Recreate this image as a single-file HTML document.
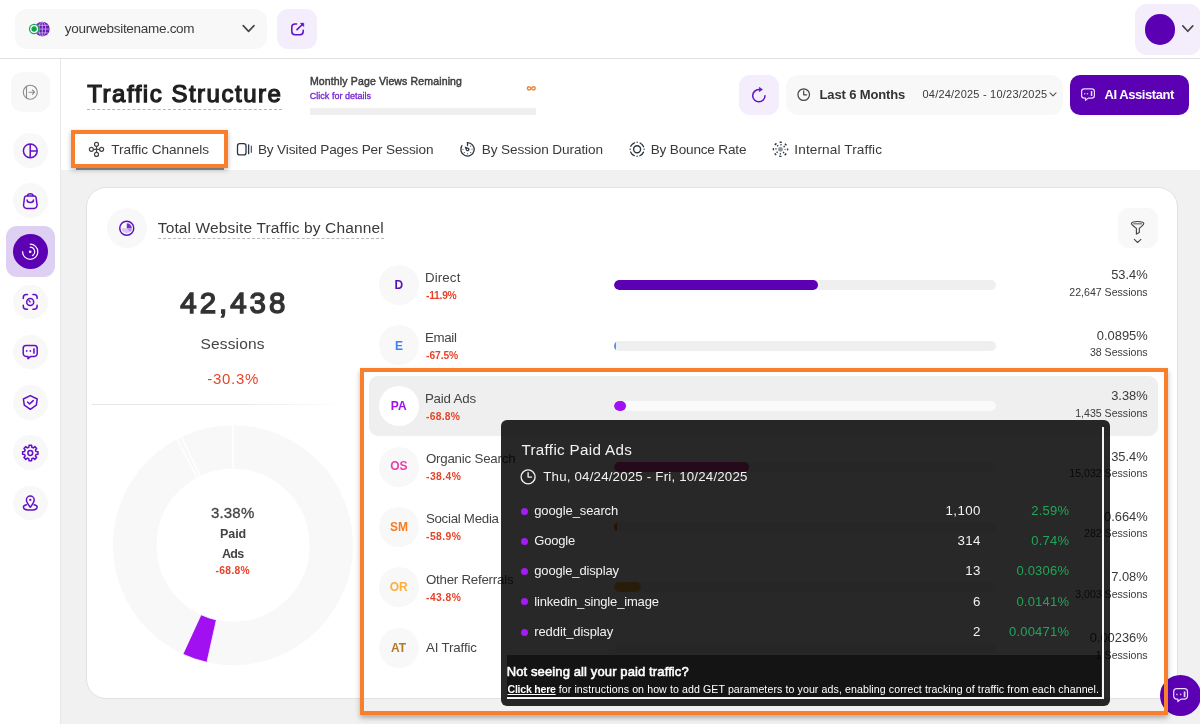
<!DOCTYPE html>
<html>
<head>
<meta charset="utf-8">
<title>Traffic Structure</title>
<style>
*{box-sizing:border-box;margin:0;padding:0}
html,body{width:1200px;height:724px;overflow:hidden;background:#fff;font-family:"Liberation Sans",sans-serif;color:#333}
.a{position:absolute}
.t{position:absolute;white-space:nowrap;line-height:1}
svg{position:absolute;overflow:visible}
.sbc{position:absolute;left:13px;width:34.800px;height:34.800px;border-radius:50%;background:#f8f8f8}
.chc{position:absolute;left:378.9px;width:40px;height:40px;border-radius:50%;background:#f8f8f8}
.trk{position:absolute;left:613.75px;width:382.5px;height:10px;border-radius:5px;background:#efefef;overflow:hidden}
.fil{position:absolute;left:0;top:0;height:10px;border-radius:5px}
.bul{position:absolute;left:520.7px;width:7px;height:7px;border-radius:50%;background:#a21cf3}
</style>
</head>
<body>
<div id="wrap" style="position:absolute;left:0;top:0;width:1200px;height:724px;will-change:transform">
<!-- base layout -->
<div class="a" style="left:0;top:0;width:1200px;height:58px;background:#fff"></div>
<div class="a" style="left:0;top:58px;width:1200px;height:1px;background:#e0e0e0"></div>
<div class="a" style="left:60px;top:59px;width:1px;height:665px;background:#e7e7e7"></div>
<div class="a" style="left:61px;top:170px;width:1139px;height:554px;background:#f1f1f1"></div>

<!-- TOP BAR -->
<div class="a" style="left:15px;top:9px;width:252px;height:40px;border-radius:12px;background:#f8f8f8"></div>
<svg style="left:26px;top:19px" width="28" height="20" viewBox="26 19 28 20">
  <circle cx="42.300" cy="29.100" r="7.400" fill="#6a1bb5"/>
  <g stroke="#d9c4f2" stroke-width="0.700" fill="none">
    <path d="M42.300 21.700v14.800M34.900 29.100h14.800M36.500 25.300h11.600M36.500 32.900h11.600"/>
    <ellipse cx="42.300" cy="29.100" rx="3.400" ry="7.400"/>
  </g>
  <circle cx="34.1" cy="29" r="5.2" fill="#1fa855"/>
  <circle cx="34.1" cy="29" r="3.9" fill="#fff"/>
  <circle cx="34.1" cy="29" r="2.7" fill="#10a34e"/>
</svg>
<svg style="left:240px;top:22px" width="18" height="14" viewBox="240 22 18 14"><path d="M243.2 25.6l5.4 5.8 5.4-5.8" fill="none" stroke="#444" stroke-width="1.6" stroke-linecap="round" stroke-linejoin="round"/></svg>
<div class="a" style="left:277px;top:9px;width:40px;height:40px;border-radius:11px;background:#f3edfc"></div>
<svg style="left:288px;top:20px" width="20" height="20" viewBox="288 20 20 20">
  <g fill="none" stroke="#5e14c4" stroke-width="1.550" stroke-linecap="round" stroke-linejoin="round">
    <path d="M296.6 23.9h-1.6a3.2 3.2 0 0 0-3.2 3.2v4.5a3.2 3.2 0 0 0 3.2 3.2h5a3.2 3.2 0 0 0 3.2-3.2v-1.4"/>
    <path d="M297 29.6l5.6-5.4"/>
  </g>
  <path d="M300.500 23.300h3.200v3.200z" fill="#5e14c4" stroke="#5e14c4" stroke-width="0.700" stroke-linejoin="round"/>
</svg>
<div class="a" style="left:1135px;top:4.100px;width:66px;height:50.500px;border-radius:12px;background:#f3edfc"></div>
<div class="a" style="left:1145px;top:14.3px;width:30.4px;height:30.4px;border-radius:50%;background:#5b00b3"></div>
<svg style="left:1180px;top:22px" width="16" height="14" viewBox="1180 22 16 14"><path d="M1182.8 25.9l5 5.4 5-5.4" fill="none" stroke="#444" stroke-width="1.6" stroke-linecap="round" stroke-linejoin="round"/></svg>

<!-- SIDEBAR -->
<div class="a" style="left:10.8px;top:72px;width:39.2px;height:40px;border-radius:11px;background:#f8f8f8"></div>
<svg style="left:20px;top:82px" width="20" height="20" viewBox="20 82 20 20">
  <g fill="none" stroke="#8c8c8c" stroke-width="1.1" stroke-linecap="round" stroke-linejoin="round">
    <circle cx="30.3" cy="92.2" r="7"/><path d="M26.5 86.4v11.6"/><path d="M29 92.2h5.4M32.4 90l2.2 2.2-2.2 2.2"/>
  </g>
</svg>
<div class="sbc" style="top:132.9px"></div>
<svg style="left:20px;top:140px" width="20" height="20" viewBox="20 140 20 20">
  <g fill="none" stroke="#6410c8" stroke-width="1.5"><circle cx="30.3" cy="150.8" r="6.9"/><path d="M30.2 143.9v13.8M30.2 151h6.9"/></g>
</svg>
<div class="sbc" style="top:183.3px"></div>
<svg style="left:20px;top:190px" width="20" height="20" viewBox="20 190 20 20">
  <g fill="none" stroke="#6410c8" stroke-width="1.5" stroke-linecap="round" stroke-linejoin="round">
    <path d="M26.500 195.900h7.600a2 2 0 0 1 2 1.700l.900 6.900a3.200 3.200 0 0 1-3.200 3.900h-7a3.200 3.200 0 0 1-3.200-3.900l.900-6.900a2 2 0 0 1 2-1.700z"/>
    <path d="M27.600 195.700a2.700 1.900 0 0 1 5.400 0"/>
    <path d="M27.100 200a3.200 2.500 0 0 0 6.400 0"/>
  </g>
</svg>
<div class="a" style="left:6px;top:226.3px;width:48.6px;height:50.4px;border-radius:11px;background:#ddd0f2"></div>
<div class="a" style="left:12.7px;top:234px;width:35.2px;height:35.2px;border-radius:50%;background:#5b00b3"></div>
<svg style="left:20px;top:241px" width="20" height="20" viewBox="20 241 20 20">
  <g fill="none" stroke="#fff" stroke-width="1.2" stroke-linecap="round">
    <path d="M30.2 244.1a7.6 7.6 0 1 1-7.6 7.6"/>
    <path d="M30.2 247.2a4.5 4.5 0 0 1 2.2 8.4"/>
  </g>
  <circle cx="30.2" cy="251.7" r="1.3" fill="#fff"/>
</svg>
<div class="sbc" style="top:284.6px"></div>
<svg style="left:20px;top:292px" width="20" height="20" viewBox="20 292 20 20">
  <g fill="none" stroke="#6410c8" stroke-width="1.5" stroke-linecap="round" stroke-linejoin="round">
    <path d="M23.3 298.6v-1a3 3 0 0 1 3-3h1.2M32.9 294.6h1.2a3 3 0 0 1 3 3v1M37.1 305.3v1a3 3 0 0 1-3 3h-1.2M27.5 309.3h-1.2a3 3 0 0 1-3-3v-1"/>
    <circle cx="30.2" cy="302" r="3.5"/>
    <path d="M30.2 302l-1.5-1.6" stroke-width="1.2"/>
  </g>
</svg>
<div class="sbc" style="top:334.6px"></div>
<svg style="left:20px;top:342px" width="20" height="20" viewBox="20 342 20 20">
  <g fill="none" stroke="#6410c8" stroke-width="1.5" stroke-linejoin="round">
    <path d="M26 345.6h8.4a2.8 2.8 0 0 1 2.8 2.8v5.2a2.8 2.8 0 0 1-2.8 2.8h-3.6l-2.8 2.3v-2.3h-2a2.8 2.8 0 0 1-2.8-2.8v-5.2a2.8 2.8 0 0 1 2.8-2.8z"/>
  </g>
  <rect x="25.9" y="350.1" width="1.5" height="1.7" fill="#6410c8"/><rect x="29.6" y="350.1" width="1.5" height="1.7" fill="#6410c8"/>
  <rect x="33" y="348.3" width="1.9" height="5.4" fill="#7c3ad6"/>
</svg>
<div class="sbc" style="top:385px"></div>
<svg style="left:20px;top:392px" width="20" height="20" viewBox="20 392 20 20">
  <g fill="none" stroke="#6410c8" stroke-width="1.5" stroke-linecap="round" stroke-linejoin="round">
    <path d="M30.3 395.6l6.9 3.4-.9 6.2-6 4.1-6-4.1-.9-6.2z"/>
    <path d="M27.6 402l2 2 3.6-3.4"/>
  </g>
</svg>
<div class="sbc" style="top:435.4px"></div>
<svg style="left:20px;top:443px" width="20" height="20" viewBox="20 443 20 20">
  <g fill="none" stroke="#6410c8" stroke-width="1.5" stroke-linejoin="round">
    <circle cx="30.3" cy="453" r="2.4"/>
    <path d="M28.82 447.29L29.01 445.31L31.59 445.31L31.78 447.29L33.29 447.92L34.83 446.65L36.65 448.47L35.38 450.01L36.01 451.52L37.99 451.71L37.99 454.29L36.01 454.48L35.38 455.99L36.65 457.53L34.83 459.35L33.29 458.08L31.78 458.71L31.59 460.69L29.01 460.69L28.82 458.71L27.31 458.08L25.77 459.35L23.95 457.53L25.22 455.99L24.59 454.48L22.61 454.29L22.61 451.71L24.59 451.52L25.22 450.01L23.95 448.47L25.77 446.65L27.31 447.92Z"/>
  </g>
</svg>
<div class="sbc" style="top:485.7px"></div>
<svg style="left:20px;top:493px" width="20" height="20" viewBox="20 493 20 20">
  <g fill="none" stroke="#6410c8" stroke-width="1.5" stroke-linecap="round" stroke-linejoin="round">
    <path d="M30.3 507.2c-2-2.6-3.9-4.9-3.9-7.2a3.9 3.9 0 0 1 7.8 0c0 2.3-1.9 4.6-3.9 7.2z"/>
    <path d="M26.4 504.8c-1.9.5-3 1.3-3 2.3 0 1.700 3.100 3 6.900 3s6.900-1.300 6.900-3c0-1-1.100-1.800-3-2.300"/>
  </g>
  <circle cx="30.3" cy="499.900" r="1.150" fill="#6410c8"/>
</svg>

<!-- HEADER -->
<div class="a" style="left:86.5px;top:109px;width:195px;height:0;border-top:1px dashed #b4b4b4"></div>
<div class="a" style="left:309.7px;top:108.3px;width:226.5px;height:6.4px;background:#efefef"></div>
<svg style="left:525px;top:84px" width="13" height="9" viewBox="525 84 13 9"><path d="M531.300 88.350c-.800-1.100-1.500-1.650-2.300-1.650a1.650 1.650 0 0 0 0 3.300c.800 0 1.500-.550 2.300-1.650zm0 0c.800 1.100 1.500 1.650 2.300 1.650a1.650 1.650 0 0 0 0-3.300c-.800 0-1.500.550-2.300 1.650z" fill="none" stroke="#f5822f" stroke-width="1.400"/></svg>
<div class="a" style="left:739px;top:74.600px;width:40px;height:40px;border-radius:11px;background:#f3edfc"></div>
<svg style="left:749px;top:85px" width="20" height="20" viewBox="749 85 20 20">
  <path d="M765 95.700a6.150 6.150 0 1 1-6.150-6.150" fill="none" stroke="#5e14c4" stroke-width="1.500" stroke-linecap="round"/>
  <path d="M759.400 87.400l3 2.100-3 2.100z" fill="#5e14c4" stroke="#5e14c4" stroke-width="0.700" stroke-linejoin="round"/>
</svg>
<div class="a" style="left:786px;top:74.600px;width:277px;height:40px;border-radius:12px;background:#f8f8f8"></div>
<svg style="left:796px;top:87px" width="16" height="16" viewBox="796 87 16 16">
  <g fill="none" stroke="#444" stroke-width="1.200" stroke-linecap="round" stroke-linejoin="round"><circle cx="803.700" cy="94.600" r="5.800"/><path d="M803.700 90.900v3.900h3"/></g>
</svg>
<svg style="left:1048px;top:90px" width="10" height="8" viewBox="1048 90 10 8"><path d="M1050 92.900l3 3 3-3" fill="none" stroke="#555" stroke-width="1.100" stroke-linecap="round" stroke-linejoin="round"/></svg>
<div class="a" style="left:1070px;top:74.500px;width:118.800px;height:40.200px;border-radius:10px;background:#5b00b3"></div>
<svg style="left:1079px;top:86px" width="18" height="17" viewBox="1079 86 18 17">
  <path d="M1084.300 88.900h7.400a2.700 2.700 0 0 1 2.700 2.700v3.800a2.700 2.700 0 0 1-2.700 2.700h-3.500l-2.700 2.200v-2.200h-1.200a2.700 2.700 0 0 1-2.700-2.700v-3.800a2.700 2.700 0 0 1 2.700-2.700z" fill="none" stroke="#eadffb" stroke-width="1.200" stroke-linejoin="round"/>
  <rect x="1084" y="93" width="1.300" height="1.400" fill="#cdb5f2"/><rect x="1086.800" y="93" width="1.300" height="1.400" fill="#cdb5f2"/>
  <rect x="1090.800" y="91" width="1.500" height="5" fill="#eadffb"/>
</svg>

<!-- TABS -->
<div class="a" style="left:75.500px;top:168px;width:148px;height:1.800px;background:#8e9396"></div>
<svg style="left:88px;top:141px" width="18" height="17" viewBox="88 141 18 17">
  <g fill="none" stroke="#444" stroke-width="1.200">
    <circle cx="96.500" cy="144.300" r="2"/><circle cx="96.500" cy="154.400" r="2"/><circle cx="91.400" cy="149.300" r="2"/><circle cx="101.600" cy="149.300" r="2"/>
    <path d="M96.500 146.300v6.100M93.400 149.300h6.200"/>
  </g>
</svg>
<svg style="left:235px;top:141px" width="20" height="17" viewBox="235 141 20 17">
  <g fill="none" stroke="#2a3540" stroke-linecap="round">
    <rect x="237.500" y="143.700" width="8.500" height="11.200" rx="2.200" stroke-width="1.300"/>
    <path d="M248.600 144.800v8.900" stroke-width="1.300"/><path d="M251.300 146.100v6.300" stroke-width="1"/>
  </g>
</svg>
<svg style="left:458px;top:140px" width="20" height="19" viewBox="458 140 20 19">
  <g fill="none" stroke="#2a3540" stroke-width="1.300" stroke-linecap="round">
    <path d="M467.500 142.600a6.700 6.700 0 1 1-5.600 3"/>
    <path d="M467.500 142.600v3"/>
  </g>
  <g fill="#2a3540">
    <circle cx="470.700" cy="146.100" r="0.550"/><circle cx="472" cy="149.300" r="0.550"/><circle cx="470.700" cy="152.500" r="0.550"/><circle cx="467.500" cy="153.800" r="0.550"/><circle cx="464.300" cy="152.500" r="0.550"/><circle cx="463" cy="149.300" r="0.550"/>
    <path d="M464.600 146.400l3.800 1.300a1.900 1.900 0 1 1-2.500 2.500z"/>
  </g>
  <circle cx="467.400" cy="149.500" r="0.700" fill="#fff"/>
</svg>
<svg style="left:628px;top:140px" width="19" height="19" viewBox="628 140 19 19">
  <g fill="none" stroke="#2a3540" stroke-linecap="round">
    <circle cx="637.100" cy="149.300" r="3.500" stroke-width="1.400"/>
    <circle cx="637.100" cy="149.300" r="7" stroke-width="1.300" stroke-dasharray="5.200 5.796" stroke-dashoffset="-2.900"/>
  </g>
  <g fill="#2a3540"><circle cx="637.100" cy="142.300" r="0.700"/><circle cx="637.100" cy="156.300" r="0.700"/><circle cx="630.100" cy="149.300" r="0.700"/><circle cx="644.100" cy="149.300" r="0.700"/></g>
</svg>
<svg style="left:771px;top:140px" width="19" height="19" viewBox="771 140 19 19">
  <circle cx="780.500" cy="149.300" r="2.400" fill="#8e969c"/>
  <circle cx="780.500" cy="149.300" r="4.500" fill="none" stroke="#2a3540" stroke-width="1.400" stroke-dasharray="1.300 2.234" stroke-dashoffset="0.650"/>
  <circle cx="780.500" cy="149.300" r="7.100" fill="none" stroke="#2a3540" stroke-width="1.400" stroke-dasharray="2.200 3.376" stroke-dashoffset="1.100"/>
</svg>

<!-- CARD -->
<div class="a" style="left:86px;top:187px;width:1092.300px;height:511.800px;border-radius:20px;background:#fff;border:1px solid #e2e2e2"></div>
<div class="a" style="left:106.700px;top:207.800px;width:40px;height:40px;border-radius:50%;background:#f8f8f8"></div>
<svg style="left:118px;top:219px" width="18" height="18" viewBox="118 219 18 18">
  <path d="M126.750 228.250v-5.100a5.100 5.100 0 0 1 5.100 5.100z" fill="#7631cf"/>
  <path d="M131.850 228.250a5.100 5.100 0 0 1-10.200 0z" fill="#d8c4f2"/>
  <path d="M131.850 228.250a5.100 5.100 0 0 1-1.500 3.600l-3.600-3.600z" fill="#b892e6"/>
  <circle cx="126.750" cy="228.250" r="7" fill="none" stroke="#5b10c0" stroke-width="1.500"/>
</svg>
<div class="a" style="left:157.500px;top:238px;width:226.500px;height:0;border-top:1px dashed #b8b8b8"></div>
<div class="a" style="left:1117.500px;top:208px;width:40px;height:40px;border-radius:11px;background:#f8f8f8"></div>
<svg style="left:1129px;top:219px" width="18" height="26" viewBox="1129 219 18 26">
  <g fill="none" stroke="#444" stroke-width="1.150" stroke-linejoin="round" stroke-linecap="round">
    <path d="M1131.400 223.700c0-1.400 2.700-2.200 6.200-2.200s6.200.8 6.200 2.200c0 1.100-2.600 2.800-4.500 4.700v4.100l-2.900 1.600v-5.700c-2-1.900-5-3.600-5-4.700z"/>
    <path d="M1133.800 223.700h7.600" stroke="#888" stroke-width="1.600"/>
    <path d="M1134.300 239.300l3.300 3.200 3.300-3.200" stroke-width="1.050"/>
  </g>
</svg>
<div class="a" style="left:92px;top:404px;width:250px;height:1px;background:linear-gradient(90deg,#e6e6e6 0%,#e9e9e9 60%,rgba(240,240,240,0) 100%)"></div>

<!-- DONUT -->
<svg style="left:108px;top:420px" width="250" height="250" viewBox="108 420 250 250"><circle cx="233.0" cy="545.2" r="98.25" fill="none" stroke="#f8f8f8" stroke-width="43.5"/><path d="M233.00 468.70L233.00 425.20" stroke="#fff" stroke-width="1.300"/><path d="M197.22 477.58L176.88 439.13" stroke="#fff" stroke-width="1.300"/><path d="M200.07 476.15L181.35 436.88" stroke="#fff" stroke-width="1.300"/><path d="M206.96 662.34A120.0 120.0 0 0 1 182.86 654.22L201.04 614.70A76.5 76.5 0 0 0 216.40 619.88Z" fill="#a010f0" stroke="#fff" stroke-width="0.8"/></svg>

<!-- CHANNEL ROWS -->
<div class="a" style="left:369px;top:376.200px;width:788.600px;height:60px;border-radius:9px;background:#efefef"></div>
<div class="chc" style="top:265.300px"></div>
<div class="chc" style="top:325.400px"></div>
<div class="chc" style="top:386.250px;background:#fff"></div>
<div class="chc" style="top:446.500px"></div>
<div class="chc" style="top:507.300px"></div>
<div class="chc" style="top:567px"></div>
<div class="chc" style="top:627.900px"></div>
<div class="trk" style="top:280.100px"><div class="fil" style="width:204.300px;background:#5b00b3"></div></div>
<div class="trk" style="top:340.900px"><div class="fil" style="width:3px;left:-1.200px;background:#4f95f5"></div></div>
<div class="trk" style="top:401.250px;background:#fafafa"><div class="fil" style="width:12.700px;background:#a010f0"></div></div>
<div class="trk" style="top:461.500px"><div class="fil" style="width:135.600px;background:#e83fae"></div></div>
<div class="trk" style="top:522.300px"><div class="fil" style="width:4px;left:-1.200px;background:#f57c24"></div></div>
<div class="trk" style="top:582.400px"><div class="fil" style="width:27px;background:#fbb040"></div></div>
<div class="trk" style="top:643px"></div>

<div class="t" style="left:64.80px;top:20px;line-height:17px;font-size:13.5px;color:#3a3a3a;letter-spacing:-0.295px;">yourwebsitename.com</div>
<div class="t" style="left:87.30px;top:79px;line-height:29px;font-size:24px;color:#1f1f1f;letter-spacing:1.510px;-webkit-text-stroke:1.25px #1f1f1f;">Traffic Structure</div>
<div class="t" style="left:309.90px;top:74px;line-height:14px;font-size:10.5px;color:#3d3d3d;letter-spacing:0.148px;-webkit-text-stroke:0.45px #3d3d3d;">Monthly Page Views Remaining</div>
<div class="t" style="left:309.80px;top:90px;line-height:12px;font-size:9px;color:#7424d0;letter-spacing:0.018px;-webkit-text-stroke:0.3px #7424d0;">Click for details</div>
<div class="t" style="left:819.50px;top:86px;line-height:17px;font-size:13px;color:#333;font-weight:bold;letter-spacing:-0.139px;">Last 6 Months</div>
<div class="t" style="left:922.50px;top:87px;line-height:14px;font-size:11px;color:#3a3a3a;letter-spacing:0.215px;">04/24/2025 - 10/23/2025</div>
<div class="t" style="left:1104.50px;top:86px;line-height:17px;font-size:13px;color:#fff;font-weight:bold;letter-spacing:-0.437px;">AI Assistant</div>
<div class="t" style="left:111.20px;top:141px;line-height:17px;font-size:13.6px;color:#3a3a3a;letter-spacing:-0.028px;">Traffic Channels</div>
<div class="t" style="left:257.90px;top:141px;line-height:17px;font-size:13.6px;color:#3a3a3a;letter-spacing:-0.149px;">By Visited Pages Per Session</div>
<div class="t" style="left:481.70px;top:141px;line-height:17px;font-size:13.6px;color:#3a3a3a;letter-spacing:-0.100px;">By Session Duration</div>
<div class="t" style="left:650.70px;top:141px;line-height:17px;font-size:13.6px;color:#3a3a3a;letter-spacing:-0.190px;">By Bounce Rate</div>
<div class="t" style="left:794.30px;top:141px;line-height:17px;font-size:13.6px;color:#3a3a3a;letter-spacing:0.125px;">Internal Traffic</div>
<div class="t" style="left:157.75px;top:218px;line-height:19px;font-size:15.5px;color:#3a3a3a;letter-spacing:0.136px;">Total Website Traffic by Channel</div>
<div class="t" style="left:180.30px;top:285px;line-height:35px;font-size:29.5px;color:#333;letter-spacing:2.956px;-webkit-text-stroke:1.4px #333;">42,438</div>
<div class="t" style="left:200.50px;top:334px;line-height:19px;font-size:15.5px;color:#444;letter-spacing:0.158px;">Sessions</div>
<div class="t" style="left:207.25px;top:369px;line-height:19px;font-size:15px;color:#e8432a;letter-spacing:0.712px;">-30.3%</div>
<div class="t" style="left:394.40px;top:277px;line-height:16px;font-size:12px;color:#5b13b5;font-weight:bold;">D</div>
<div class="t" style="left:424.90px;top:269px;line-height:17px;font-size:13.3px;color:#444;letter-spacing:0.144px;">Direct</div>
<div class="t" style="left:426.10px;top:289px;line-height:13px;font-size:10.3px;color:#e8432a;font-weight:bold;letter-spacing:-0.280px;">-11.9%</div>
<div class="t" style="left:1111.21px;top:266px;line-height:17px;font-size:12.9px;color:#3a3a3a;">53.4%</div>
<div class="t" style="left:1069.27px;top:285px;line-height:14px;font-size:10.6px;color:#3a3a3a;">22,647 Sessions</div>
<div class="t" style="left:394.90px;top:338px;line-height:16px;font-size:12px;color:#3b82f6;font-weight:bold;">E</div>
<div class="t" style="left:424.90px;top:329px;line-height:17px;font-size:13.3px;color:#444;letter-spacing:-0.324px;">Email</div>
<div class="t" style="left:426.10px;top:349px;line-height:13px;font-size:10.3px;color:#e8432a;font-weight:bold;letter-spacing:-0.094px;">-67.5%</div>
<div class="t" style="left:1096.87px;top:327px;line-height:17px;font-size:12.9px;color:#3a3a3a;">0.0895%</div>
<div class="t" style="left:1089.88px;top:345px;line-height:14px;font-size:10.6px;color:#3a3a3a;">38 Sessions</div>
<div class="t" style="left:390.84px;top:398px;line-height:16px;font-size:12px;color:#a010f0;font-weight:bold;">PA</div>
<div class="t" style="left:424.90px;top:390px;line-height:17px;font-size:13.3px;color:#444;letter-spacing:-0.189px;">Paid Ads</div>
<div class="t" style="left:426.10px;top:410px;line-height:13px;font-size:10.3px;color:#e8432a;font-weight:bold;letter-spacing:0.256px;">-68.8%</div>
<div class="t" style="left:1111.21px;top:387px;line-height:17px;font-size:12.9px;color:#3a3a3a;">3.38%</div>
<div class="t" style="left:1075.16px;top:406px;line-height:14px;font-size:10.6px;color:#3a3a3a;">1,435 Sessions</div>
<div class="t" style="left:390.23px;top:458px;line-height:16px;font-size:12px;color:#e83fae;font-weight:bold;">OS</div>
<div class="t" style="left:425.90px;top:450px;line-height:17px;font-size:13.3px;color:#444;letter-spacing:-0.207px;">Organic Search</div>
<div class="t" style="left:426.10px;top:470px;line-height:13px;font-size:10.3px;color:#e8432a;font-weight:bold;letter-spacing:0.426px;">-38.4%</div>
<div class="t" style="left:1111.21px;top:448px;line-height:17px;font-size:12.9px;color:#3a3a3a;">35.4%</div>
<div class="t" style="left:1069.27px;top:466px;line-height:14px;font-size:10.6px;color:#3a3a3a;">15,032 Sessions</div>
<div class="t" style="left:389.90px;top:519px;line-height:16px;font-size:12px;color:#f57c24;font-weight:bold;">SM</div>
<div class="t" style="left:425.90px;top:510px;line-height:17px;font-size:13.3px;color:#444;letter-spacing:-0.276px;">Social Media</div>
<div class="t" style="left:426.10px;top:530px;line-height:13px;font-size:10.3px;color:#e8432a;font-weight:bold;letter-spacing:0.426px;">-58.9%</div>
<div class="t" style="left:1104.04px;top:508px;line-height:17px;font-size:12.9px;color:#3a3a3a;">0.664%</div>
<div class="t" style="left:1083.99px;top:526px;line-height:14px;font-size:10.6px;color:#3a3a3a;">282 Sessions</div>
<div class="t" style="left:389.73px;top:579px;line-height:16px;font-size:12px;color:#fbb040;font-weight:bold;">OR</div>
<div class="t" style="left:425.90px;top:571px;line-height:17px;font-size:13.3px;color:#444;letter-spacing:-0.232px;">Other Referrals</div>
<div class="t" style="left:426.10px;top:591px;line-height:13px;font-size:10.3px;color:#e8432a;font-weight:bold;letter-spacing:0.426px;">-43.8%</div>
<div class="t" style="left:1111.21px;top:568px;line-height:17px;font-size:12.9px;color:#3a3a3a;">7.08%</div>
<div class="t" style="left:1075.16px;top:587px;line-height:14px;font-size:10.6px;color:#3a3a3a;">3,003 Sessions</div>
<div class="t" style="left:391.01px;top:640px;line-height:16px;font-size:12px;color:#b5782a;font-weight:bold;">AT</div>
<div class="t" style="left:425.90px;top:639px;line-height:17px;font-size:13.3px;color:#444;letter-spacing:-0.124px;">AI Traffic</div>
<div class="t" style="left:1089.70px;top:629px;line-height:17px;font-size:12.9px;color:#3a3a3a;">0.00236%</div>
<div class="t" style="left:1095.78px;top:648px;line-height:14px;font-size:10.6px;color:#3a3a3a;">1 Sessions</div>
<div class="t" style="left:210.90px;top:503px;line-height:19px;font-size:15px;color:#444;letter-spacing:0.201px;-webkit-text-stroke:0.3px #444;">3.38%</div>
<div class="t" style="left:220.10px;top:526px;line-height:16px;font-size:12.5px;color:#444;font-weight:bold;letter-spacing:-0.121px;">Paid</div>
<div class="t" style="left:221.95px;top:546px;line-height:16px;font-size:12.5px;color:#444;font-weight:bold;letter-spacing:-0.681px;">Ads</div>
<div class="t" style="left:215.60px;top:564px;line-height:13px;font-size:10.3px;color:#e8432a;font-weight:bold;letter-spacing:0.306px;">-68.8%</div>

<!-- chat bubble (under orange frame) -->
<div class="a" style="left:1159.900px;top:675px;width:40.800px;height:40.800px;border-radius:50%;background:#5b00b3"></div>
<svg style="left:1171px;top:686px" width="20" height="19" viewBox="1171 686 20 19">
  <path d="M1176.700 688.700h7.800a3 3 0 0 1 3 3v4.400a3 3 0 0 1-3 3h-3.700l-2.900 2.400v-2.400h-1.200a3 3 0 0 1-3-3v-4.400a3 3 0 0 1 3-3z" fill="none" stroke="#eadffb" stroke-width="1.200" stroke-linejoin="round"/>
  <rect x="1176.200" y="693.700" width="1.400" height="1.500" fill="#d6c2f5"/><rect x="1179.900" y="693.700" width="1.400" height="1.500" fill="#d6c2f5"/>
  <rect x="1183.700" y="691.400" width="1.700" height="5.700" fill="#e3d5f9"/>
</svg>

<!-- ORANGE FRAMES -->
<div class="a" style="left:71px;top:130px;width:157px;height:38px;border:4px solid #fa7f2d;box-shadow:0 2px 5px rgba(0,0,0,0.26)"></div>
<div class="a" style="left:360px;top:368px;width:808px;height:347px;border:4px solid #fa7f2d;box-shadow:0 3px 5px rgba(0,0,0,0.28)"></div>

<!-- TOOLTIP -->
<div class="a" style="left:500.500px;top:419.500px;width:609.300px;height:286px;border-radius:6px;background:rgba(0,0,0,0.842)"></div>
<div class="a" style="left:507px;top:654.500px;width:594px;height:42.200px;background:rgba(0,0,0,0.48)"></div>
<div class="a" style="left:507px;top:426.500px;width:596.500px;height:272.800px;border-right:2.500px solid #f4f4f4;border-bottom:2.500px solid #f4f4f4"></div>
<svg style="left:519px;top:469px" width="18" height="18" viewBox="519 469 18 18">
  <g fill="none" stroke="#f2f2f2" stroke-width="1.350" stroke-linecap="round" stroke-linejoin="round"><circle cx="528.100" cy="476.900" r="7"/><path d="M528.100 472.600v4.500h3.500"/></g>
</svg>
<div class="bul" style="top:507.750px"></div>
<div class="bul" style="top:537.950px"></div>
<div class="bul" style="top:568.150px"></div>
<div class="bul" style="top:598.350px"></div>
<div class="bul" style="top:628.550px"></div>
<div class="t" style="left:521.40px;top:440px;line-height:19px;font-size:15.2px;color:#f2f2f2;letter-spacing:0.329px;">Traffic Paid Ads</div>
<div class="t" style="left:543.25px;top:468px;line-height:17px;font-size:13.3px;color:#f2f2f2;letter-spacing:0.189px;">Thu, 04/24/2025 - Fri, 10/24/2025</div>
<div class="t" style="left:534.25px;top:502px;line-height:17px;font-size:13px;color:#f2f2f2;letter-spacing:-0.109px;">google_search</div>
<div class="t" style="left:945.52px;top:502px;line-height:17px;font-size:13.3px;color:#f2f2f2;letter-spacing:0.400px;">1,100</div>
<div class="t" style="left:1031.30px;top:502px;line-height:17px;font-size:13px;color:#22a559;letter-spacing:0.200px;">2.59%</div>
<div class="t" style="left:534.25px;top:532px;line-height:17px;font-size:13px;color:#f2f2f2;letter-spacing:-0.188px;">Google</div>
<div class="t" style="left:957.41px;top:532px;line-height:17px;font-size:13.3px;color:#f2f2f2;letter-spacing:0.400px;">314</div>
<div class="t" style="left:1031.30px;top:532px;line-height:17px;font-size:13px;color:#22a559;letter-spacing:0.200px;">0.74%</div>
<div class="t" style="left:534.25px;top:562px;line-height:17px;font-size:13px;color:#f2f2f2;letter-spacing:-0.153px;">google_display</div>
<div class="t" style="left:965.20px;top:562px;line-height:17px;font-size:13.3px;color:#f2f2f2;letter-spacing:0.400px;">13</div>
<div class="t" style="left:1016.44px;top:562px;line-height:17px;font-size:13px;color:#22a559;letter-spacing:0.200px;">0.0306%</div>
<div class="t" style="left:534.25px;top:593px;line-height:17px;font-size:13px;color:#f2f2f2;letter-spacing:-0.159px;">linkedin_single_image</div>
<div class="t" style="left:973.00px;top:593px;line-height:17px;font-size:13.3px;color:#f2f2f2;letter-spacing:0.400px;">6</div>
<div class="t" style="left:1016.44px;top:593px;line-height:17px;font-size:13px;color:#22a559;letter-spacing:0.200px;">0.0141%</div>
<div class="t" style="left:534.25px;top:623px;line-height:17px;font-size:13px;color:#f2f2f2;letter-spacing:-0.093px;">reddit_display</div>
<div class="t" style="left:973.00px;top:623px;line-height:17px;font-size:13.3px;color:#f2f2f2;letter-spacing:0.400px;">2</div>
<div class="t" style="left:1009.01px;top:623px;line-height:17px;font-size:13px;color:#22a559;letter-spacing:0.200px;">0.00471%</div>
<div class="t" style="left:506.70px;top:663px;line-height:17px;font-size:13px;color:#fff;letter-spacing:0.118px;-webkit-text-stroke:0.55px #fff;">Not seeing all your paid traffic?</div>
<div class="t" style="left:507.50px;top:682px;line-height:14px;font-size:10.6px;color:#fff;letter-spacing:0.095px;"><b style="text-decoration:underline;letter-spacing:-0.250px">Click here</b> for instructions on how to add GET parameters to your ads, enabling correct tracking of traffic from each channel.</div>
</div>
</body>
</html>
